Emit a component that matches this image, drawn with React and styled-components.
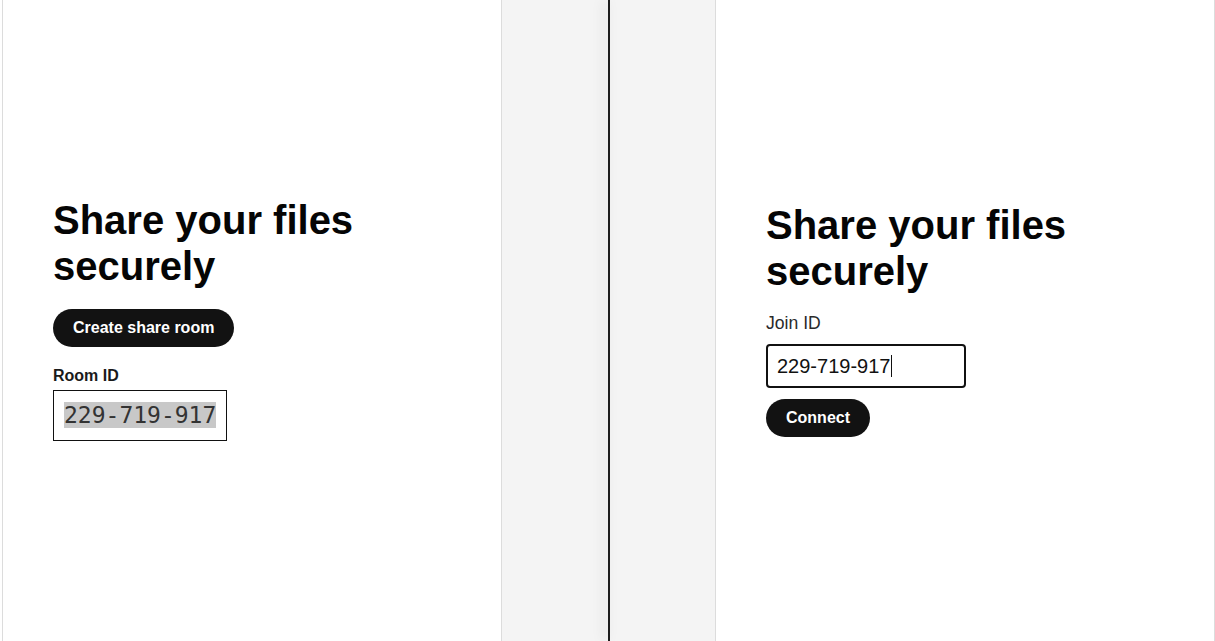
import styled, { createGlobalStyle } from "styled-components";

const GlobalStyle = createGlobalStyle`
  html, body {
    margin: 0;
    padding: 0;
    height: 100%;
    background: #ffffff;
    font-family: "Liberation Sans", Arial, Helvetica, sans-serif;
  }
  #root {
    height: 100%;
  }
`;

const Split = styled.div`
  display: flex;
  height: 100vh;
  overflow: hidden;
`;

const Half = styled.div`
  flex: none;
  width: ${(p) => p.$width}px;
  display: flex;
  justify-content: ${(p) => (p.$side === "right" ? "flex-end" : "flex-start")};
  padding-left: ${(p) => (p.$side === "left" ? "2px" : "0")};
  background: ${(p) =>
    p.$side === "left"
      ? "linear-gradient(to right, #ffffff 2px, #f4f4f4 2px)"
      : "linear-gradient(to left, #ffffff 1px, #f4f4f4 1px)"};
  box-sizing: border-box;
`;

const Divider = styled.div`
  flex: none;
  width: 2px;
  background: #1c1c1c;
  box-shadow: -4px 0 12px rgba(0, 0, 0, 0.18);
  position: relative;
  z-index: 1;
`;

const Panel = styled.section`
  width: 500px;
  box-sizing: border-box;
  background: #ffffff;
  border-left: 1px solid #dcdcdc;
  border-right: 1px solid #dcdcdc;
  display: flex;
  flex-direction: column;
  justify-content: center;
  padding: ${(p) => (p.$join ? "0 0 2px 50px" : "0 0 4px 50px")};
`;

const Title = styled.h1`
  margin: 0 0 ${(p) => p.$gap}px;
  font-size: 40px;
  font-weight: 700;
  line-height: 46px;
  color: #050505;
`;

const PillButton = styled.button`
  align-self: flex-start;
  height: 38px;
  padding: 0 20px;
  border: none;
  border-radius: 19px;
  background: #121212;
  color: #ffffff;
  font-family: inherit;
  font-size: 16px;
  font-weight: 700;
  cursor: pointer;
`;

const FieldLabel = styled.label`
  display: block;
  margin: ${(p) => (p.$bold ? "20px 0 5px" : "0 0 11px")};
  font-size: ${(p) => (p.$bold ? "16px" : "17.6px")};
  line-height: ${(p) => (p.$bold ? "18px" : "20px")};
  font-weight: ${(p) => (p.$bold ? 700 : 400)};
  color: ${(p) => (p.$bold ? "#1a1a1a" : "#2a2a2a")};
`;

const RoomBox = styled.div`
  align-self: flex-start;
  border: 1px solid #111111;
  padding: 11px 10px;
  font-family: "DejaVu Sans Mono", "Liberation Mono", monospace;
  font-size: 23px;
  line-height: 27px;
  color: #333333;
`;

const Selected = styled.span`
  background: #c8c8c8;
`;

const JoinInput = styled.div`
  width: 200px;
  height: 44px;
  box-sizing: border-box;
  border: 2px solid #111111;
  border-radius: 4px;
  padding: 0 9px;
  display: flex;
  align-items: center;
  font-size: 20px;
  color: #111111;
  margin-bottom: 11px;
`;

const Caret = styled.span`
  display: inline-block;
  width: 1px;
  height: 22px;
  background: #111111;
  margin-left: 1px;
`;

export default function App() {
  return (
    <>
      <GlobalStyle />
      <Split>
        <Half $side="left" $width={608}>
          <Panel>
            <Title $gap={20}>
              Share your files
              <br />
              securely
            </Title>
            <PillButton>Create share room</PillButton>
            <FieldLabel $bold>Room ID</FieldLabel>
            <RoomBox>
              <Selected>229-719-917</Selected>
            </RoomBox>
          </Panel>
        </Half>
        <Divider />
        <Half $side="right" $width={605}>
          <Panel $join>
            <Title $gap={19}>
              Share your files
              <br />
              securely
            </Title>
            <FieldLabel>Join ID</FieldLabel>
            <JoinInput>
              229-719-917
              <Caret />
            </JoinInput>
            <PillButton>Connect</PillButton>
          </Panel>
        </Half>
      </Split>
    </>
  );
}
